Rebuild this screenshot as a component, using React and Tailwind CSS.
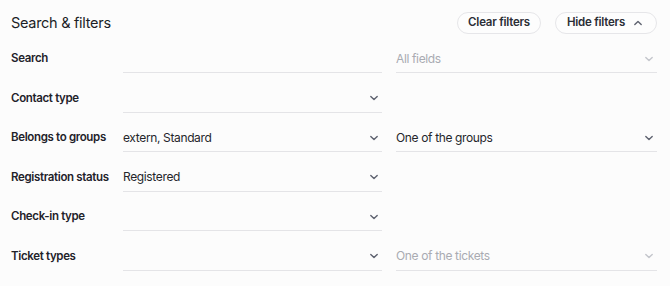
import React from "react";

function Chevron({ light, up }) {
  return (
    <svg
      width="10"
      height="10"
      viewBox="0 0 10 10"
      className={light ? "text-[#c4c6cc]" : "text-[#5f6370]"}
    >
      <path
        d={up ? "M1.8 6.6 L5 3.4 L8.2 6.6" : "M1.8 3.4 L5 6.6 L8.2 3.4"}
        fill="none"
        stroke="currentColor"
        strokeWidth="1.4"
        strokeLinecap="round"
        strokeLinejoin="round"
      />
    </svg>
  );
}

function Field({ value, placeholder, disabled, noChevron }) {
  return (
    <div className="flex h-[28px] items-center border-b border-[#e4e4e7] pr-[3px]">
      <span
        className={
          "flex-1 truncate text-[12px] tracking-[-0.03em] " +
          (value ? "text-[#25262b]" : "text-[#a9abb2]")
        }
      >
        {value || placeholder || ""}
      </span>
      {!noChevron && <Chevron light={disabled} />}
    </div>
  );
}

const rows = [
  { label: "Search", left: { noChevron: true }, right: { placeholder: "All fields", disabled: true } },
  { label: "Contact type", left: {} },
  { label: "Belongs to groups", left: { value: "extern, Standard" }, right: { value: "One of the groups" } },
  { label: "Registration status", left: { value: "Registered" } },
  { label: "Check-in type", left: {} },
  { label: "Ticket types", left: {}, right: { placeholder: "One of the tickets", disabled: true } },
];

export default function App() {
  return (
    <div
      className="min-h-[286px] w-[670px] bg-[#fcfcfc] px-[11px] pt-[12px]"
      style={{ fontFamily: "Inter, 'Noto Sans', sans-serif" }}
    >
      <div className="flex h-[22px] items-center justify-between pr-[2px]">
        <h2 className="text-[14.5px] tracking-[-0.02em] text-[#1c1f26]">Search &amp; filters</h2>
        <div className="flex gap-[14px]">
          <button className="h-[22px] rounded-full border border-[#e6e6e9] bg-[#fdfdfd] px-[10px] text-[11.5px] font-semibold tracking-[-0.02em] text-[#2b2e36]">
            Clear filters
          </button>
          <button className="flex h-[22px] items-center gap-[8px] rounded-full border border-[#e6e6e9] bg-[#fdfdfd] pl-[11px] pr-[13px] text-[11.5px] font-semibold tracking-[-0.02em] text-[#2b2e36]">
            Hide filters
            <Chevron up />
          </button>
        </div>
      </div>
      <div className="mt-[11px] grid grid-cols-[98px_259px_261px] gap-x-[14px] gap-y-[11.5px]">
        {rows.map((r) => (
          <React.Fragment key={r.label}>
            <div className="flex h-[28px] items-center whitespace-nowrap text-[11.5px] font-semibold tracking-[-0.03em] text-[#1f222a]">
              {r.label}
            </div>
            <Field {...r.left} />
            {r.right ? <Field {...r.right} /> : <div />}
          </React.Fragment>
        ))}
      </div>
    </div>
  );
}
